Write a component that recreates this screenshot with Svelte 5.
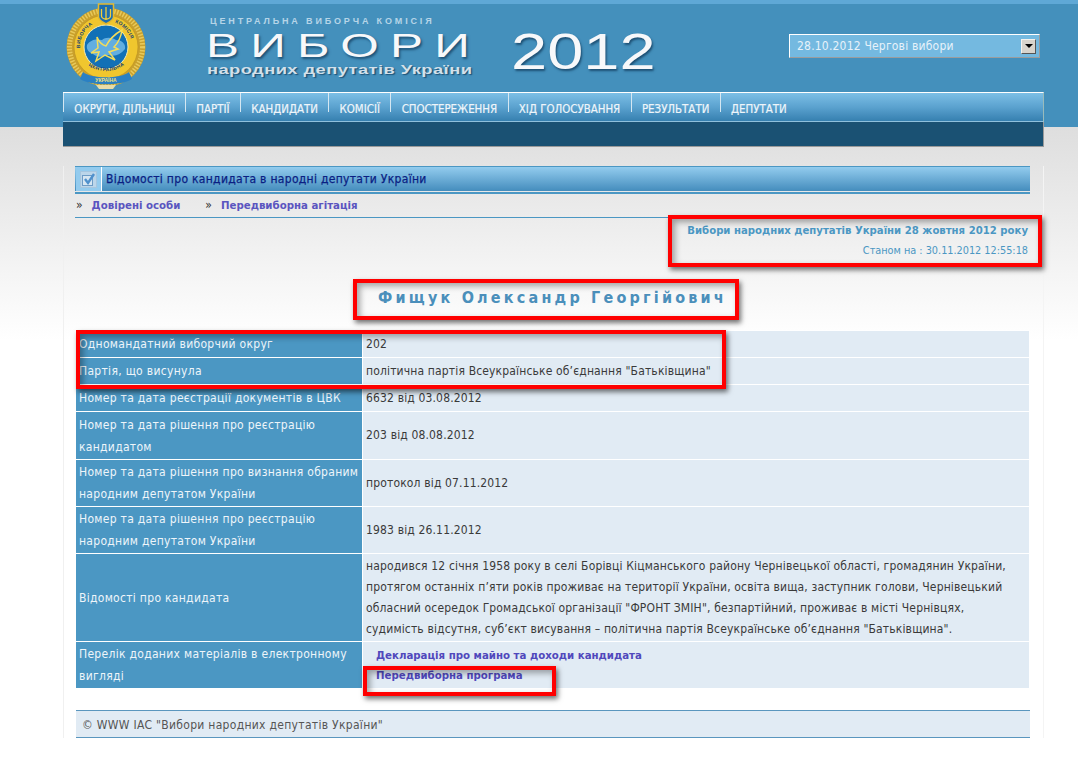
<script lang="ts">
  const menu = [
    "ОКРУГИ, ДІЛЬНИЦІ",
    "ПАРТІЇ",
    "КАНДИДАТИ",
    "КОМІСІЇ",
    "СПОСТЕРЕЖЕННЯ",
    "ХІД ГОЛОСУВАННЯ",
    "РЕЗУЛЬТАТИ",
    "ДЕПУТАТИ",
  ];

  const rows = [
    { label: "Одномандатний виборчий округ", value: "202", h: 27 },
    { label: "Партія, що висунула", value: 'політична партія Всеукраїнське об’єднання "Батьківщина"', h: 27 },
    { label: "Номер та дата реєстрації документів в ЦВК", value: "6632 від 03.08.2012", h: 27 },
    { label: "Номер та дата рішення про реєстрацію кандидатом", value: "203 від 08.08.2012", h: 48 },
    { label: "Номер та дата рішення про визнання обраним народним депутатом України", value: "протокол від 07.11.2012", h: 47 },
    { label: "Номер та дата рішення про реєстрацію народним депутатом України", value: "1983 від 26.11.2012", h: 47 },
    {
      label: "Відомості про кандидата",
      value:
        'народився 12 січня 1958 року в селі Борівці Кіцманського району Чернівецької області, громадянин України, протягом останніх п’яти років проживає на території України, освіта вища, заступник голови, Чернівецький обласний осередок Громадської організації "ФРОНТ ЗМІН", безпартійний, проживає в місті Чернівцях, судимість відсутня, суб’єкт висування – політична партія Всеукраїнське об’єднання "Батьківщина".',
      h: 88,
    },
  ];
</script>

<div class="band">
  <div class="wrap">
    <div class="head">
      <svg class="logo" width="84" height="90" viewBox="0 0 84 90">
        <defs>
          <path id="ringTop" d="M17.6 54.9 A26 26 0 1 1 66.4 54.9" />
          <path id="ringBot" d="M13 46 A29.5 29.5 0 0 0 71 46" />
        </defs>
        <circle cx="42" cy="46" r="39.5" fill="#c9a02c" />
        <circle cx="42" cy="46" r="36.5" fill="none" stroke="#e8c95a" stroke-width="5" stroke-dasharray="1.5 1.5" />
        <circle cx="42" cy="46" r="32" fill="#f0c62e" stroke="#b98f22" stroke-width="0.6" />
        <circle cx="42" cy="46" r="22" fill="#1270b6" stroke="#f7ecb0" stroke-width="1" />
        <path d="M23 44c4-6 10-6 15-5 3-3 10-3 14 0 6 0 10 4 9 9-5 6-10 8-17 6-6 3-13 2-16-2-3 0-6-4-5-8z" fill="#62aee0" />
        <path d="M33 36c2 5 5 8 9 9 3-6 9-12 16-16-1 7-4 13-8 17l4 2-9 3 6 8-10-5-9 6 3-9-8 1 7-5z" fill="none" stroke="#f3dc5a" stroke-width="1.5" />
        <text class="ring"><textPath href="#ringTop" startOffset="8">ВИБОРЧА</textPath></text>
        <text class="ring"><textPath href="#ringTop" startOffset="59">КОМІСІЯ</textPath></text>
        <text class="ring"><textPath href="#ringBot" startOffset="22">ЦЕНТРАЛЬНА</textPath></text>
        <path d="M19 71c8 7 38 7 46 0l3 7c-10 7-42 7-52 0z" fill="#2a80c4" />
        <text class="ribbon" x="42" y="81" text-anchor="middle">УКРАЇНА</text>
        <path d="M32 84h20l-3 4H35z" fill="#e8dca8" />
        <path d="M34.5 3h15v13c0 3-4 5-7.500 7-3.500-2-7.500-4-7.500-7z" fill="#1c6db0" stroke="#e3b92f" stroke-width="1.5" />
        <path d="M42 6v13M37.500 8v7c0 2 2.500 3 4.500 3s4.500-1 4.500-3V8" fill="none" stroke="#f2cf3a" stroke-width="1.300" />
      </svg>

      <div class="title">
        <div class="cvk">ЦЕНТРАЛЬНА ВИБОРЧА КОМІСІЯ</div>
        <div class="vybory">ВИБОРИ</div>
        <div class="deputies">народних депутатів України</div>
      </div>

      <div class="year">2012</div>

      <div class="select">
        <span>28.10.2012 Чергові вибори</span>
        <span class="arrow"></span>
      </div>
    </div>

    <nav class="menu">
      {#each menu as item}
        <a href="#top">{item}</a>
      {/each}
    </nav>
    <div class="darkbar"></div>
  </div>
</div>

<main class="content">
  <div class="section-title">
    <span class="check">
      <svg width="17" height="17" viewBox="0 0 17 17">
        <rect x="0.5" y="0.5" width="16" height="16" fill="#bcd6ea" stroke="#a6c6df" />
        <rect x="2.5" y="4.5" width="10" height="10" fill="#d6e6f2" stroke="#6e9cc6" />
        <path d="M5 8l3 4 6-9" fill="none" stroke="#4f90cc" stroke-width="2.4" />
      </svg>
    </span>
    <span class="section-text">Відомості про кандидата в народні депутати України</span>
  </div>

  <div class="sublinks">
    <span class="raquo">»</span><a href="#top">Довірені особи</a>
    <span class="raquo second">»</span><a href="#top">Передвиборна агітація</a>
  </div>

  <div class="status">
    <div class="status-title">Вибори народних депутатів України 28 жовтня 2012 року</div>
    <div class="status-date">Станом на : 30.11.2012 12:55:18</div>
  </div>

  <h1>Фищук Олександр Георгійович</h1>

  <table>
    <tbody>
      {#each rows as row}
        <tr style="height: {row.h}px">
          <th>{row.label}</th>
          <td>{row.value}</td>
        </tr>
      {/each}
      <tr class="files">
        <th>Перелік доданих матеріалів в електронному вигляді</th>
        <td>
          <a href="#top">Декларація про майно та доходи кандидата</a>
          <a href="#top">Передвиборна програма</a>
        </td>
      </tr>
    </tbody>
  </table>

  <div class="copyright">© WWW IAC "Вибори народних депутатів України"</div>
</main>

<!-- annotation frames drawn over the page -->
<div class="mark" style="left: 668px; top: 215px; width: 374px; height: 52px"></div>
<div class="mark" style="left: 353px; top: 279px; width: 386px; height: 41px"></div>
<div class="mark" style="left: 76px; top: 330px; width: 650px; height: 59px"></div>
<div class="mark" style="left: 363px; top: 666px; width: 193px; height: 30px"></div>

<style>
  :global(body) {
    margin: 0;
    background: linear-gradient(#dedede 127px, #fff 340px) no-repeat;
    font-family: "DejaVu Sans Condensed", Tahoma, "DejaVu Sans", sans-serif;
    font-size: 12px;
    position: relative;
  }

  a {
    text-decoration: none;
  }

  .band {
    height: 127px;
    background: #4490bc;
    border-top: 4px solid #5fa8d6;
    box-sizing: border-box;
  }

  .wrap {
    margin-left: 63px;
    width: 981px;
  }

  .head {
    height: 88px;
    display: flex;
    position: relative;
  }

  .logo {
    margin-left: 1px;
    margin-top: -3px;
    flex: none;
  }

  .ring {
    font: bold 5px "Liberation Sans", sans-serif;
    fill: #123f73;
    letter-spacing: 0.4px;
  }

  .ribbon {
    font: bold 5px "Liberation Sans", sans-serif;
    fill: #f5e27a;
  }

  .title {
    margin-left: 58px;
    width: 270px;
    flex: none;
    font-family: "Liberation Sans", Arial, sans-serif;
  }

  .cvk {
    margin: 12px 0 0 4px;
    font-size: 9px;
    font-weight: bold;
    letter-spacing: 2.85px;
    color: #b6d5e8;
    white-space: nowrap;
  }

  .vybory {
    font-size: 33px;
    line-height: 30px;
    margin-top: 5px;
    color: #f7f8fa;
    letter-spacing: 7.5px;
    transform: scaleX(1.5);
    transform-origin: left;
    text-shadow: 1px 2px 2px #1d4f73;
  }

  .deputies {
    font-size: 13px;
    font-weight: bold;
    line-height: 14px;
    margin: 2px 0 0 1px;
    color: #d3e0ea;
    letter-spacing: 0.3px;
    transform: scaleX(1.41);
    transform-origin: left;
    white-space: nowrap;
    text-shadow: 1px 1px 1px #1d4f73;
  }

  .year {
    margin: 20px 0 0 35px;
    font-family: "Liberation Sans", Arial, sans-serif;
    font-size: 50px;
    line-height: 56px;
    height: 56px;
    color: #f7f8fa;
    transform: scaleX(1.3);
    transform-origin: left;
    text-shadow: 1px 2px 2px #1d4f73;
  }

  .select {
    margin: 30px 4px 0 auto;
    width: 251px;
    height: 24px;
    box-sizing: border-box;
    display: flex;
    align-items: center;
    justify-content: space-between;
    padding: 0 3px 0 7px;
    background: #74b9e0;
    color: #e6f2fa;
    letter-spacing: 0.2px;
    border: 1px solid;
    border-color: #fff #9c9c9c #9c9c9c #fff;
  }

  .arrow {
    width: 15px;
    height: 15px;
    background: #d8d4cc;
    box-sizing: border-box;
    border: 1px solid;
    border-color: #f4f2ee #555 #555 #f4f2ee;
    position: relative;
  }

  .arrow::after {
    content: "";
    position: absolute;
    left: 3px;
    top: 4px;
    border: 4px solid transparent;
    border-top-color: #000;
    border-bottom: 0;
  }

  .menu {
    height: 30px;
    box-sizing: border-box;
    display: flex;
    border-top: 1px solid #fff;
    border-right: 1px solid #9bb;
    background: linear-gradient(#7cbfe6, #5ba2cf 50%, #3680b0);
    border-bottom: 1px solid #8fc0dc;
  }

  .menu a {
    padding: 0 10.35px;
    height: 19px;
    line-height: 32px;
    border-left: 1px solid #d5e7f2;
    color: #eef5fa;
    font-size: 11.4px;
    white-space: nowrap;
    -webkit-text-stroke: 0.2px #eef5fa;
  }

  .darkbar {
    height: 25px;
    background: #1a5173;
    border-right: 1px solid #9a9a9a;
    border-bottom: 1px solid #9a9a9a;
    box-sizing: border-box;
  }

  .content {
    margin: 39px 0 0 63px;
    width: 981px;
    height: 572px;
    box-sizing: border-box;
    padding: 0 13px 0 11px;
    border-left: 1px solid #f0f0f0;
    border-right: 1px solid #f4f4f4;
  }

  .section-title {
    display: flex;
    border-top: 1px solid #4b97c3;
    border-bottom: 2px solid #4b97c3;
    background: linear-gradient(#93ccee, #418abb);
    background-clip: content-box;
    height: 24px;
    padding-bottom: 1px;
  }

  .check {
    width: 25px;
    height: 24px;
    background: #93cbee;
    border-right: 1px solid #fff;
    margin-left: 1px;
    display: flex;
    align-items: center;
    justify-content: center;
  }

  .section-text {
    padding-left: 4px;
    line-height: 25px;
    color: #0a1f83;
    font-size: 12px;
    letter-spacing: 0.3px;
    -webkit-text-stroke: 0.25px #0a1f83;
  }

  .sublinks {
    height: 23px;
    line-height: 22px;
    border-bottom: 1px solid #4b97c3;
    color: #333;
    display: flex;
  }

  .sublinks a {
    color: #5a55c0;
    font-weight: bold;
    font-size: 11.35px;
    margin-left: 9px;
  }

  .raquo {
    padding-left: 1px;
  }

  .raquo.second {
    margin-left: 24px;
  }

  .status {
    padding: 6px 2px 0 0;
    text-align: right;
    height: 56px;
    box-sizing: border-box;
    color: #4b97c3;
  }

  .status-title {
    font-weight: bold;
    font-size: 11.25px;
    line-height: 14px;
  }

  .status-date {
    margin-top: 6px;
    line-height: 14px;
    font-size: 10.8px;
  }

  h1 {
    margin: 12px 0 0;
    height: 44px;
    line-height: 24px;
    text-align: center;
    font-size: 16px;
    font-weight: bold;
    letter-spacing: 3.2px;
    color: #4b8fbb;
  }

  table {
    border-collapse: collapse;
    width: 955px;
    table-layout: fixed;
  }

  th,
  td {
    border: 1px solid #fff;
    font-weight: normal;
    text-align: left;
    padding: 0 3px;
    font-size: 12px;
  }

  th {
    width: 280px;
    background: #4b97c3;
    color: #eef5fa;
    letter-spacing: 0.3px;
    line-height: 22px;
  }

  td {
    background: #e1ebf4;
    color: #3a3a3a;
    letter-spacing: 0.15px;
    line-height: 21px;
    padding-right: 18px;
  }

  .files th {
    height: 46px;
  }

  .files td a {
    display: block;
    margin-left: 10px;
    color: #5048bc;
    font-weight: bold;
    font-size: 11.35px;
    letter-spacing: 0;
    line-height: 20px;
  }

  .copyright {
    margin: 21px 0 0 1px;
    height: 28px;
    line-height: 28px;
    box-sizing: border-box;
    padding-left: 6px;
    background: #e1ebf4;
    border-top: 1px solid #5a96be;
    border-bottom: 1px solid #5a96be;
    color: #555;
    letter-spacing: 0.3px;
  }

  .mark {
    position: absolute;
    box-sizing: border-box;
    border: 4px solid #f00;
    box-shadow:
      2px 3px 5px rgba(0, 0, 0, 0.55),
      inset 3px 3px 6px rgba(0, 0, 0, 0.35);
  }
</style>
